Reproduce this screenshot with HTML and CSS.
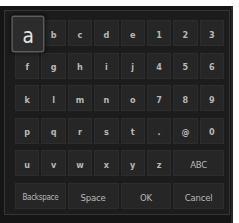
FILE: index.html
```html
<!DOCTYPE html>
<html lang="en">
<head>
    <meta charset="UTF-8">
    <title>Keyboard</title>
    <link rel="stylesheet" href="styles.css">
</head>
<body>
    <div class="frame">
        <div class="panel">
            <div class="keys">
                <div class="key active">a</div>
                <div class="key">b</div>
                <div class="key">c</div>
                <div class="key">d</div>
                <div class="key">e</div>
                <div class="key">1</div>
                <div class="key">2</div>
                <div class="key">3</div>

                <div class="key">f</div>
                <div class="key">g</div>
                <div class="key">h</div>
                <div class="key">i</div>
                <div class="key">j</div>
                <div class="key">4</div>
                <div class="key">5</div>
                <div class="key">6</div>

                <div class="key">k</div>
                <div class="key">l</div>
                <div class="key">m</div>
                <div class="key">n</div>
                <div class="key">o</div>
                <div class="key">7</div>
                <div class="key">8</div>
                <div class="key">9</div>

                <div class="key">p</div>
                <div class="key">q</div>
                <div class="key">r</div>
                <div class="key">s</div>
                <div class="key">t</div>
                <div class="key">.</div>
                <div class="key">@</div>
                <div class="key">0</div>

                <div class="key">u</div>
                <div class="key">v</div>
                <div class="key">w</div>
                <div class="key">x</div>
                <div class="key">y</div>
                <div class="key">z</div>
                <div class="key wide">ABC</div>

                <div class="key wide small">Backspace</div>
                <div class="key wide">Space</div>
                <div class="key wide">OK</div>
                <div class="key wide">Cancel</div>
            </div>
        </div>
    </div>
</body>
</html>
```

FILE: styles.css
```css
body {
    background-color: #ffffff;
    margin: 0;
    font-family: 'DejaVu Sans Condensed', 'Liberation Sans Narrow', 'Liberation Sans', sans-serif;
    font-stretch: condensed;
}

.frame {
    margin-top: 6px;
    width: 233px;
    height: 217px;
    box-sizing: border-box;
    background-color: #151515;
    border-right: 2px solid #2a2a2a;
    padding: 4px 4px 0 4px;
}

.panel {
    width: 226px;
    height: 205px;
    box-sizing: border-box;
    border: 1px solid #353535;
    background-color: #1c1c1c;
    padding: 9px 0 0 10px;
}

.keys {
    display: grid;
    width: 209px;
    grid-template-columns: repeat(8, 1fr);
    grid-template-rows: repeat(6, 26px);
    column-gap: 2px;
    row-gap: 6.6px;
}

.key {
    background-color: #262626;
    border: 1px solid #2d2d2d;
    color: #b8b8b8;
    font-size: 9px;
    font-weight: bold;
    display: flex;
    align-items: center;
    justify-content: center;
    padding-top: 3px;
    box-sizing: border-box;
}

.wide {
    grid-column: span 2;
}

.key.wide {
    font-weight: normal;
    font-size: 9.5px;
    letter-spacing: -0.2px;
}

.key.small {
    font-size: 8px;
    letter-spacing: -0.3px;
}

.active {
    position: relative;
    z-index: 2;
    transform: translate(1px, 1px) scale(1.38, 1.42);
    background-color: #2c2c2c;
    border: 1px solid #5e5e5e;
    border-radius: 2px;
    box-shadow: 0 0 3px rgba(0, 0, 0, 0.8);
    color: #e4e4e4;
    font-size: 15px;
    font-weight: normal;
    padding-top: 2px;
}
```
